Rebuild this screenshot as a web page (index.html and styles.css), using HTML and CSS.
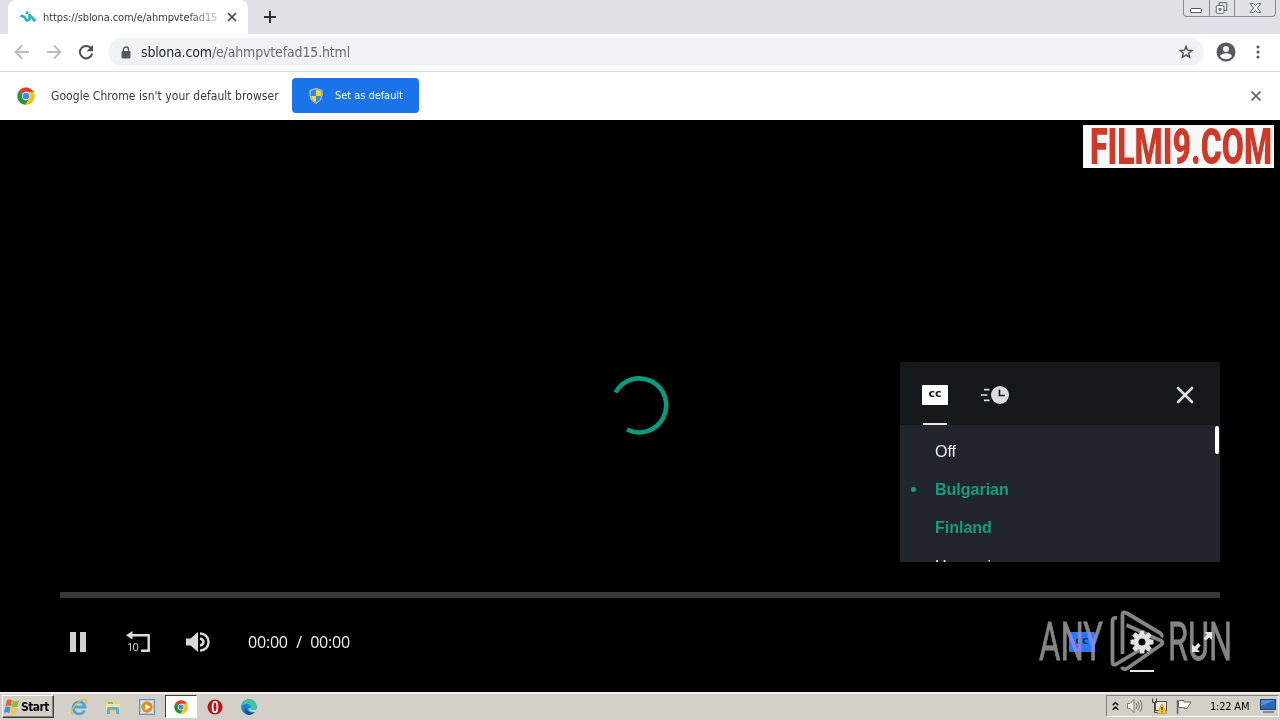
FILE: index.html
```html
<!DOCTYPE html>
<html lang="en">

    <head>
        <meta charset="UTF-8">
        <meta name="viewport" content="width=device-width, initial-scale=1.0">
        <title>sblona.com</title>
        <link rel="stylesheet" href="styles.css">
    </head>

    <body>
        <!-- shared chrome logo -->
        <svg width="0" height="0" class="defs">
            <symbol id="chrome" viewBox="0 0 24 24">
                <circle cx="12" cy="12" r="11.5" fill="#fbc116" />
                <path d="M12 12 2.2 6A11.5 11.5 0 0 1 22 6.5H12z" fill="#e33b2e" />
                <path d="M12 12 2.2 6A11.5 11.5 0 0 0 11 23.5L17 14.5z" fill="#229342" />
                <path d="M12 6.5H22A11.5 11.5 0 0 1 11 23.5L17 14z" fill="#fbc116" />
                <circle cx="12" cy="12" r="5.6" fill="#fff" />
                <circle cx="12" cy="12" r="4.4" fill="#4285f4" />
            </symbol>
        </svg>

        <div class="tabs">
            <div class="tab">
                <svg class="favicon" viewBox="0 0 16 12" width="16" height="12">
                    <path d="M.5 4.500l4 1.500 2 3.500 3-1V4l3 3 2 3.500" fill="none" stroke="#20b5bd" stroke-width="2.500" stroke-linejoin="round" />
                    <path d="M11 6l4.500 3.500" stroke="#20c5b0" stroke-width="2.200" />
                    <circle cx="7" cy="1.800" r="1.500" fill="#20b5bd" />
                </svg>
                <span class="tab-title">https://sblona.com/e/ahmpvtefad15</span>
                <svg width="10" height="10" viewBox="0 0 10 10">
                    <path d="M1 1l8 8M9 1L1 9" stroke="#3c4043" stroke-width="1.600" />
                </svg>
            </div>
            <svg class="new-tab" width="12" height="12" viewBox="0 0 12 12">
                <path d="M6 0v12M0 6h12" stroke="#2d3136" stroke-width="2" />
            </svg>
            <div class="window-btns">
                <svg width="25" height="16" viewBox="0 0 25 16">
                    <rect x="6.500" y="8.500" width="11" height="4" rx="1" fill="#fff" stroke="#535b67" />
                </svg>
                <svg width="25" height="16" viewBox="0 0 25 16">
                    <path d="M9.500 2.500h8v8h-3M9.500 2.500v3" fill="none" stroke="#535b67" />
                    <rect x="6.500" y="5.500" width="8" height="8" rx="1" fill="#fff" stroke="#535b67" />
                    <rect x="9.500" y="8.500" width="2" height="2" fill="#fff" stroke="#535b67" />
                </svg>
                <svg width="41" height="16" viewBox="0 0 41 16">
                    <path d="M15.500 3.500h3.500l2 2.200 2-2.200h3.500l-3.500 4.500 3.500 4.500h-3.500l-2-2.200-2 2.200h-3.500l3.500-4.500z" fill="#fff" stroke="#535b67" />
                </svg>
            </div>
        </div>

        <div class="toolbar">
            <svg width="16" height="16" viewBox="0 0 16 16" fill="none" stroke="#b9bbbe" stroke-width="1.800">
                <path d="M15 8H2M8 1.500L1.500 8 8 14.500" />
            </svg>
            <svg width="16" height="16" viewBox="0 0 16 16" fill="none" stroke="#b9bbbe" stroke-width="1.800">
                <path d="M1 8h13M8 1.500L14.500 8 8 14.500" />
            </svg>
            <svg width="16" height="16" viewBox="0 0 16 16">
                <path d="M13.500 5A6.200 6.200 0 1 0 14.200 9.500" fill="none" stroke="#4d5156" stroke-width="2" />
                <path d="M15 .8v6.400H8.600z" fill="#4d5156" />
            </svg>
            <div class="omnibox">
                <svg width="10" height="13" viewBox="0 0 10 13">
                    <rect x="0.500" y="5" width="9" height="7.500" rx="1" fill="#55595e" />
                    <path d="M2.500 5.500V3.500a2.500 2.500 0 0 1 5 0v2" fill="none" stroke="#55595e" stroke-width="1.400" />
                </svg>
                <span class="url"><b>sblona.com</b>/e/ahmpvtefad15.html</span>
                <svg class="star" width="16" height="16" viewBox="0 0 16 16">
                    <path d="M8 2.300l1.600 3.900 4.200.3-3.200 2.700 1 4.100L8 11.100l-3.600 2.200 1-4.100-3.200-2.700 4.200-.3z" fill="none" stroke="#505459" stroke-width="1.400" />
                </svg>
            </div>
            <svg class="profile" width="20" height="20" viewBox="0 0 20 20">
                <circle cx="10" cy="10" r="9.500" fill="#55595f" />
                <circle cx="10" cy="7" r="3" fill="#fff" />
                <path d="M4 14.300c1-4 11-4 12 0-3 4-9 4-12 0z" fill="#fff" />
            </svg>
            <svg width="4" height="16" viewBox="0 0 4 16" fill="#505459">
                <circle cx="2" cy="3" r="1.500" />
                <circle cx="2" cy="8" r="1.500" />
                <circle cx="2" cy="13" r="1.500" />
            </svg>
        </div>

        <div class="infobar">
            <svg width="18" height="18"><use href="#chrome" /></svg>
            <span class="info-text">Google Chrome isn't your default browser</span>
            <div class="default-btn">
                <svg width="14" height="16" viewBox="0 0 14 16">
                    <path d="M7 .5l6 2v5q0 5-6 8-6-3-6-8v-5z" fill="#3c86d8" stroke="#d9dfd0" />
                    <path d="M7 1.500l5 1.700V8H7zM2 8h5v6.300Q2.300 12 2 8z" fill="#f5d541" />
                </svg>
                <span>Set as default</span>
            </div>
            <svg class="info-close" width="10" height="10" viewBox="0 0 10 10">
                <path d="M.5.500l9 9M9.500.500L.5 9.500" stroke="#606368" stroke-width="1.700" />
            </svg>
        </div>

        <div class="player">
            <svg class="site-logo" width="191" height="43" viewBox="0 0 191 43">
                <text x="7" y="38.500" textLength="182" lengthAdjust="spacingAndGlyphs">FILMI9.COM</text>
            </svg>

            <svg class="spinner" width="60" height="60" viewBox="0 0 60 60">
                <path d="M5.500 16.500A27 27 0 1 1 17 53.500" fill="none" stroke="#0a9c80" stroke-width="4.600" />
            </svg>

            <div class="menu">
                <div class="menu-head">
                    <div class="menu-tab active">
                        <span class="cc">cc</span>
                    </div>
                    <div class="menu-tab">
                        <svg width="28" height="20" viewBox="0 0 28 20">
                            <path d="M3 4.700h5.500M0 10h6.500M3 15.300h5.500" stroke="#dcdcdc" stroke-width="1.700" />
                            <circle cx="19" cy="10" r="9" fill="#dcdcdc" />
                            <path d="M18.500 4.500v6H24" fill="none" stroke="#14181a" stroke-width="1.700" />
                        </svg>
                    </div>
                    <svg class="menu-close" width="18" height="18" viewBox="0 0 18 18">
                        <path d="M2 2l14 14M16 2L2 16" stroke="#e4e4e4" stroke-width="2.600" stroke-linecap="round" />
                    </svg>
                </div>
                <ul>
                    <li>Off</li>
                    <li class="on selected">Bulgarian</li>
                    <li class="on">Finland</li>
                    <li>Hungarian</li>
                </ul>
                <div class="thumb"></div>
            </div>

            <div class="progress"></div>
            <div class="controls">
                <div class="ctrl">
                    <svg width="16" height="20" viewBox="0 0 16 20" fill="#d2d2d2">
                        <path d="M0 0h6v20H0zM10 0h6v20h-6z" />
                    </svg>
                </div>
                <div class="ctrl">
                    <svg width="24" height="22" viewBox="0 0 24 22">
                        <path d="M6 4.200h16.700v15.600H15" fill="none" stroke="#dcdcdc" stroke-width="2.400" />
                        <path d="M0 4.200L6.500 0v8.500z" fill="#dcdcdc" />
                        <text class="ten" x="1" y="19.500">10</text>
                    </svg>
                </div>
                <div class="ctrl">
                    <svg width="24" height="20" viewBox="0 0 24 20">
                        <path d="M0 6.500h4.500L12 0v20l-7.500-6.500H0z" fill="#d8d8d8" />
                        <path d="M14 6.500q3.500 1 3.500 3.500T14 13.500M14 1.400a8.600 8.600 0 0 1 0 17.200" fill="none" stroke="#d8d8d8" stroke-width="2.500" />
                    </svg>
                </div>
                <div class="time"><span>00:00</span><span>/</span><span>00:00</span></div>
                <div class="ctrl right"><span class="cc blue">cc</span></div>
                <div class="ctrl active">
                    <svg width="24" height="24" viewBox="-12 -12 24 24">
                        <circle r="5.800" fill="none" stroke="#e2e2e2" stroke-width="4.600" />
                        <g fill="#e2e2e2">
                            <path id="tooth" d="M-2.300-11.500h4.600l.6 5h-5.800z" />
                            <use href="#tooth" transform="rotate(45)" />
                            <use href="#tooth" transform="rotate(90)" />
                            <use href="#tooth" transform="rotate(135)" />
                            <use href="#tooth" transform="rotate(180)" />
                            <use href="#tooth" transform="rotate(225)" />
                            <use href="#tooth" transform="rotate(270)" />
                            <use href="#tooth" transform="rotate(315)" />
                        </g>
                    </svg>
                </div>
                <div class="ctrl">
                    <svg width="20" height="20" viewBox="0 0 20 20" fill="#e4e4e4">
                        <path d="M20 0v8l-2.600-2.600-3.800 3.400-2.400-2.400 3.600-3.700L12 0zM0 20v-8l2.600 2.600 3.700-3.500 2.400 2.400-3.500 3.700L8 20z" />
                    </svg>
                </div>
            </div>

            <svg class="watermark" width="196" height="64" viewBox="0 0 196 64">
                <text x="2" y="50.500" textLength="64" lengthAdjust="spacingAndGlyphs">ANY</text>
                <text x="131" y="50.500" textLength="64" lengthAdjust="spacingAndGlyphs">RUN</text>
                <g fill="none" stroke="#858585" stroke-width="3.800" stroke-linejoin="round">
                    <path d="M85.500 45V6q0-4 4-2L123 24q3 2 1 4" />
                    <path d="M80 9q-4.500-1-4.500 3v41q0 4 4 2l33-20" />
                    <path d="M89.500 16l35 16q2 1.500 0 3.500L90 59.500q-3 2-5.500-1.500" />
                </g>
            </svg>
        </div>

        <div class="taskbar">
            <div class="start">
                <svg width="16" height="16" viewBox="0 0 16 16">
                    <path d="M3 1q2.500-1.500 5 .2L6.800 7.300Q4.500 6 1.600 7z" fill="#e8642c" />
                    <path d="M9 1.700q3 1.500 6-.2l-1.500 6.200q-3 1.300-5.700 0z" fill="#8dbd3c" />
                    <path d="M1.300 8q2.700-1 5.200.3L5.200 14Q2.700 12.800 0 13.800z" fill="#3f93d8" />
                    <path d="M7.500 8.800q3 1.300 5.700.1l-1.400 5.900q-2.700 1.200-5.600-.2z" fill="#f7c631" />
                </svg>
                <span>Start</span>
            </div>
            <div class="task">
                <svg width="18" height="18" viewBox="0 0 18 18">
                    <path d="M14.500 12.500A6 6 0 1 1 15 9H4" fill="none" stroke="#45a9e2" stroke-width="2.800" />
                    <path d="M3 16C-2 15 8 1 15 1.500c3 .5 1 3.500 0 4.500" fill="none" stroke="#e6b635" stroke-width="1.300" />
                </svg>
            </div>
            <div class="task">
                <svg width="16" height="16" viewBox="0 0 16 16">
                    <path d="M1 3l2-2h4l1 2h6v10H1z" fill="#ead27b" />
                    <path d="M3 3h5v3H3z" fill="#87bb70" />
                    <path d="M1 5h14v6H1z" fill="#f5e5a4" />
                    <path d="M2 15V9.500q0-1.500 2-1.500h8q2 0 2 1.500V15h-3v-4H5v4z" fill="#64afd2" />
                </svg>
            </div>
            <div class="task">
                <svg width="16" height="16" viewBox="0 0 16 16">
                    <rect x=".5" y=".5" width="15" height="15" fill="#a7ccec" stroke="#6396c7" />
                    <rect x="2" y="2" width="12" height="12" fill="#e5edf4" />
                    <circle cx="8" cy="8" r="5.800" fill="#ef8b16" />
                    <path d="M6 4.700v6.600L11.500 8z" fill="#fff" />
                </svg>
            </div>
            <div class="task pressed">
                <svg width="14" height="14"><use href="#chrome" /></svg>
            </div>
            <div class="task">
                <svg width="16" height="16" viewBox="0 0 16 16">
                    <circle cx="8" cy="8" r="7.500" fill="#b8161c" />
                    <ellipse cx="8" cy="8" rx="2.400" ry="5.300" fill="#b8161c" stroke="#fff" stroke-width="1.800" />
                </svg>
            </div>
            <div class="task">
                <svg width="16" height="16" viewBox="0 0 16 16">
                    <circle cx="8" cy="8" r="7.800" fill="#1683d8" />
                    <path d="M.5 7A7.700 7.700 0 0 1 15.800 8q0 3-3.800 3-3 0-2.300-2Q10 5 5.500 5 2 5 .5 7z" fill="#3bc7a4" />
                    <path d="M5.500 9q0 6 8 4.500Q10 17 6 15.500 2 12 5.500 9z" fill="#0d4f9e" />
                    <path d="M9.600 9q0 2.500 4 2l2-1v3h-3Q7 13 7.500 9.500z" fill="#d4d0c8" />
                </svg>
            </div>

            <div class="tray">
                <svg width="7" height="10" viewBox="0 0 7 10" fill="none" stroke="#000" stroke-width="1.400">
                    <path d="M.8 4.200l2.700-2.700 2.700 2.700M.8 8.700l2.700-2.700 2.700 2.700" />
                </svg>
                <svg width="16" height="16" viewBox="0 0 16 16" fill="#f4f4f2" stroke="#777" stroke-width="1">
                    <path d="M.5 5.500h2.500l4-4v13l-4-4H.5z" />
                    <path d="M9 5q2 3 0 6M11 3.500q3 4.500 0 9M13 2q4 6 0 12" fill="none" />
                </svg>
                <svg width="17" height="16" viewBox="0 0 17 16">
                    <rect x="4.500" y="3.500" width="11" height="9" fill="#e9e9e5" stroke="#555" />
                    <path d="M1.500.5v4h4v-4M3.500 4.500v10h4" fill="none" stroke="#444" />
                    <path d="M11 6l5 9.500H6z" fill="#ffcf20" stroke="#b78608" stroke-width=".6" />
                    <path d="M11 9v3.300M11 13.300v1" stroke="#222" stroke-width="1.200" />
                </svg>
                <svg width="16" height="15" viewBox="0 0 16 15">
                    <path d="M1.500 1v14" stroke="#666" stroke-width="1.500" />
                    <path d="M2.500 1.500H8v1.500h7l-2 3 -2 3.500H8.500V8.500h-6z" fill="#fff" stroke="#666" />
                </svg>
                <span class="clock">1:22 AM</span>
                <svg width="17" height="14" viewBox="0 0 17 14">
                    <rect x=".5" y=".5" width="15" height="10" fill="#2869bd" stroke="#1d4177" />
                    <path d="M1 1h14L1 7z" fill="#4c8fda" />
                    <path d="M3 13h11" stroke="#64788d" stroke-width="1.600" />
                </svg>
            </div>
        </div>
    </body>

</html>
```
FILE: styles.css
```css
* {
    padding: 0;
    margin: 0;
    list-style: none;
    box-sizing: border-box;
}

body {
    width: 1280px;
    height: 720px;
    overflow: hidden;
    display: flex;
    flex-direction: column;
    background: #000;
    font-family: "DejaVu Sans Condensed", "DejaVu Sans", sans-serif;
}

svg {
    display: block;
    flex-shrink: 0;
}

.defs {
    position: absolute;
}

/* tab strip */
.tabs {
    display: flex;
    height: 34px;
    padding-left: 8px;
    background: #dee1e6;
}

.tab {
    display: flex;
    align-items: center;
    width: 240px;
    padding-left: 12px;
    background: #fff;
    border-radius: 8px 8px 0 0;
}

.tab-title {
    width: 176px;
    margin: 0 8px 0 7px;
    overflow: hidden;
    white-space: nowrap;
    font-size: 11px;
    letter-spacing: -0.1px;
    color: transparent;
    background: linear-gradient(90deg, #303438 82%, #ccc 99%);
    -webkit-background-clip: text;
    background-clip: text;
}

.new-tab {
    margin: 11px 0 0 16px;
}

.window-btns {
    display: flex;
    height: 17px;
    margin-left: auto;
    margin-right: 4px;
    border: 1px solid #858b95;
    border-top: 0;
    border-radius: 0 0 4px 4px;
}

.window-btns svg + svg {
    border-left: 1px solid #858b95;
}

/* toolbar */
.toolbar {
    display: flex;
    align-items: center;
    gap: 16px;
    height: 38px;
    padding: 0 20px 1px 14px;
    background: #fff;
    border-bottom: 1px solid #d9dbdd;
}

.omnibox {
    display: flex;
    align-items: center;
    flex: 1;
    height: 28px;
    margin-left: -2px;
    padding: 0 10px 0 13px;
    border-radius: 14px;
    background: #f0f3f5;
}

.url {
    margin-left: 10px;
    font-size: 14px;
    letter-spacing: -0.15px;
    color: #6a6e73;
}

.url b {
    font-weight: normal;
    color: #25282c;
}

.star {
    margin-left: auto;
}

.profile {
    margin: 0 4px 0 -4px;
}

/* default browser bar */
.infobar {
    display: flex;
    align-items: center;
    height: 48px;
    padding: 0 19px 1px 17px;
    background: #fff;
}

.info-text {
    width: 229px;
    margin: 0 12px 0 16px;
    white-space: nowrap;
    font-size: 12px;
    letter-spacing: 0.05px;
    color: #35393d;
}

.default-btn {
    display: flex;
    align-items: center;
    width: 127px;
    height: 35px;
    padding-left: 17px;
    border-radius: 4px;
    background: #1a73e8;
    font-size: 11px;
    color: #fff;
}

.default-btn span {
    margin-left: 12px;
    white-space: nowrap;
    letter-spacing: -0.05px;
}

.info-close {
    margin-left: auto;
}

/* player */
.player {
    position: relative;
    display: flex;
    flex-direction: column;
    justify-content: flex-end;
    height: 572px;
    background: #000;
}

.site-logo {
    position: absolute;
    top: 5px;
    right: 6px;
    overflow: visible;
    background: #f8f8f8;
}

.site-logo text {
    font: 900 50px Roboto, sans-serif;
    fill: #cf3929;
}

.spinner {
    position: absolute;
    left: 610px;
    top: 256px;
}

.menu {
    position: absolute;
    right: 60px;
    bottom: 130px;
    width: 320px;
    height: 200px;
    overflow: hidden;
    background: #22262c;
    font-family: "Liberation Sans", sans-serif;
}

.menu-head {
    display: flex;
    height: 63px;
    padding: 0 26px 0 5px;
    background: #14181a;
}

.menu-tab {
    display: flex;
    align-items: center;
    justify-content: center;
    width: 60px;
    height: 63px;
    padding-top: 3px;
}

.menu-tab.active,
.ctrl.active {
    position: relative;
}

.menu-tab.active::after,
.ctrl.active::after {
    content: "";
    position: absolute;
    left: 18px;
    bottom: 0;
    width: 24px;
    height: 2px;
    background: #e8e8e8;
}

.cc {
    width: 26px;
    height: 20px;
    background: #fff;
    border-radius: 1px;
    text-align: center;
    font: bold 11px/18px "DejaVu Sans", sans-serif;
    color: #14181a;
}

.cc.blue {
    background: #2878f0;
    color: #0b2c68;
}

.menu-close {
    margin: 24px 0 0 auto;
}

.menu ul {
    padding-top: 8px;
}

.menu li {
    position: relative;
    height: 38px;
    padding-left: 35px;
    line-height: 38px;
    font-size: 16px;
    color: #eee;
}

.menu li:last-child {
    line-height: 40px;
}

.menu li.on {
    font-weight: bold;
    color: #159d80;
}

.menu li.selected::before {
    content: "";
    position: absolute;
    left: 11px;
    top: 16px;
    width: 5px;
    height: 5px;
    border-radius: 50%;
    background: #159d80;
}

.thumb {
    position: absolute;
    right: 1px;
    top: 64px;
    width: 4px;
    height: 28px;
    border-radius: 2px;
    background: #fff;
}

.progress {
    height: 6px;
    margin: 0 60px;
    background: #383838;
}

.controls {
    display: flex;
    align-items: center;
    height: 94px;
    padding: 0 48px 6px;
}

.ctrl {
    display: flex;
    align-items: center;
    justify-content: center;
    width: 60px;
    height: 60px;
}

.ctrl.right {
    margin-left: auto;
}

.ten {
    font: 11px "Open Sans", sans-serif;
    letter-spacing: -0.7px;
    fill: #dcdcdc;
}

.time {
    display: flex;
    justify-content: space-between;
    width: 102px;
    margin-left: 20px;
    font: 16px "Open Sans", sans-serif;
    letter-spacing: -0.2px;
    color: #f2f2f2;
}

.watermark {
    position: absolute;
    left: 1037px;
    top: 489px;
    overflow: visible;
    mix-blend-mode: lighten;
}

.watermark text {
    font: 53px Roboto, sans-serif;
    fill: #858585;
    stroke: #858585;
    stroke-width: 0.8px;
}

/* taskbar */
.taskbar {
    display: flex;
    height: 28px;
    padding: 3px 0 0 2px;
    background: #d4d0c8;
    box-shadow: inset 0 2px 0 #efede9;
}

.start {
    display: flex;
    align-items: center;
    width: 52px;
    height: 23px;
    margin-right: 8px;
    padding-left: 1px;
    border: 1px solid #fff;
    border-right-color: #404040;
    border-bottom-color: #404040;
    box-shadow: inset -1px -1px 0 #808080;
    font-size: 12px;
    font-weight: bold;
    letter-spacing: -0.6px;
}

.start span {
    margin-left: 1px;
}

.task {
    display: flex;
    align-items: center;
    justify-content: center;
    width: 34px;
    height: 24px;
}

.task.pressed {
    width: 32px;
    height: 23px;
    margin: 0 1px;
    border: 1px solid #404040;
    border-right-color: #fff;
    border-bottom-color: #fff;
    background: #fff;
}

.tray {
    display: flex;
    align-items: center;
    gap: 8px;
    width: 173px;
    height: 22px;
    margin-left: auto;
    margin-right: 1px;
    padding-left: 5px;
    border: 1px solid #808080;
    border-right-color: #fff;
    border-bottom-color: #fff;
}

.clock {
    width: 41px;
    margin: 0 1px 0 10px;
    white-space: nowrap;
    font-size: 11px;
    letter-spacing: -0.2px;
}
```
